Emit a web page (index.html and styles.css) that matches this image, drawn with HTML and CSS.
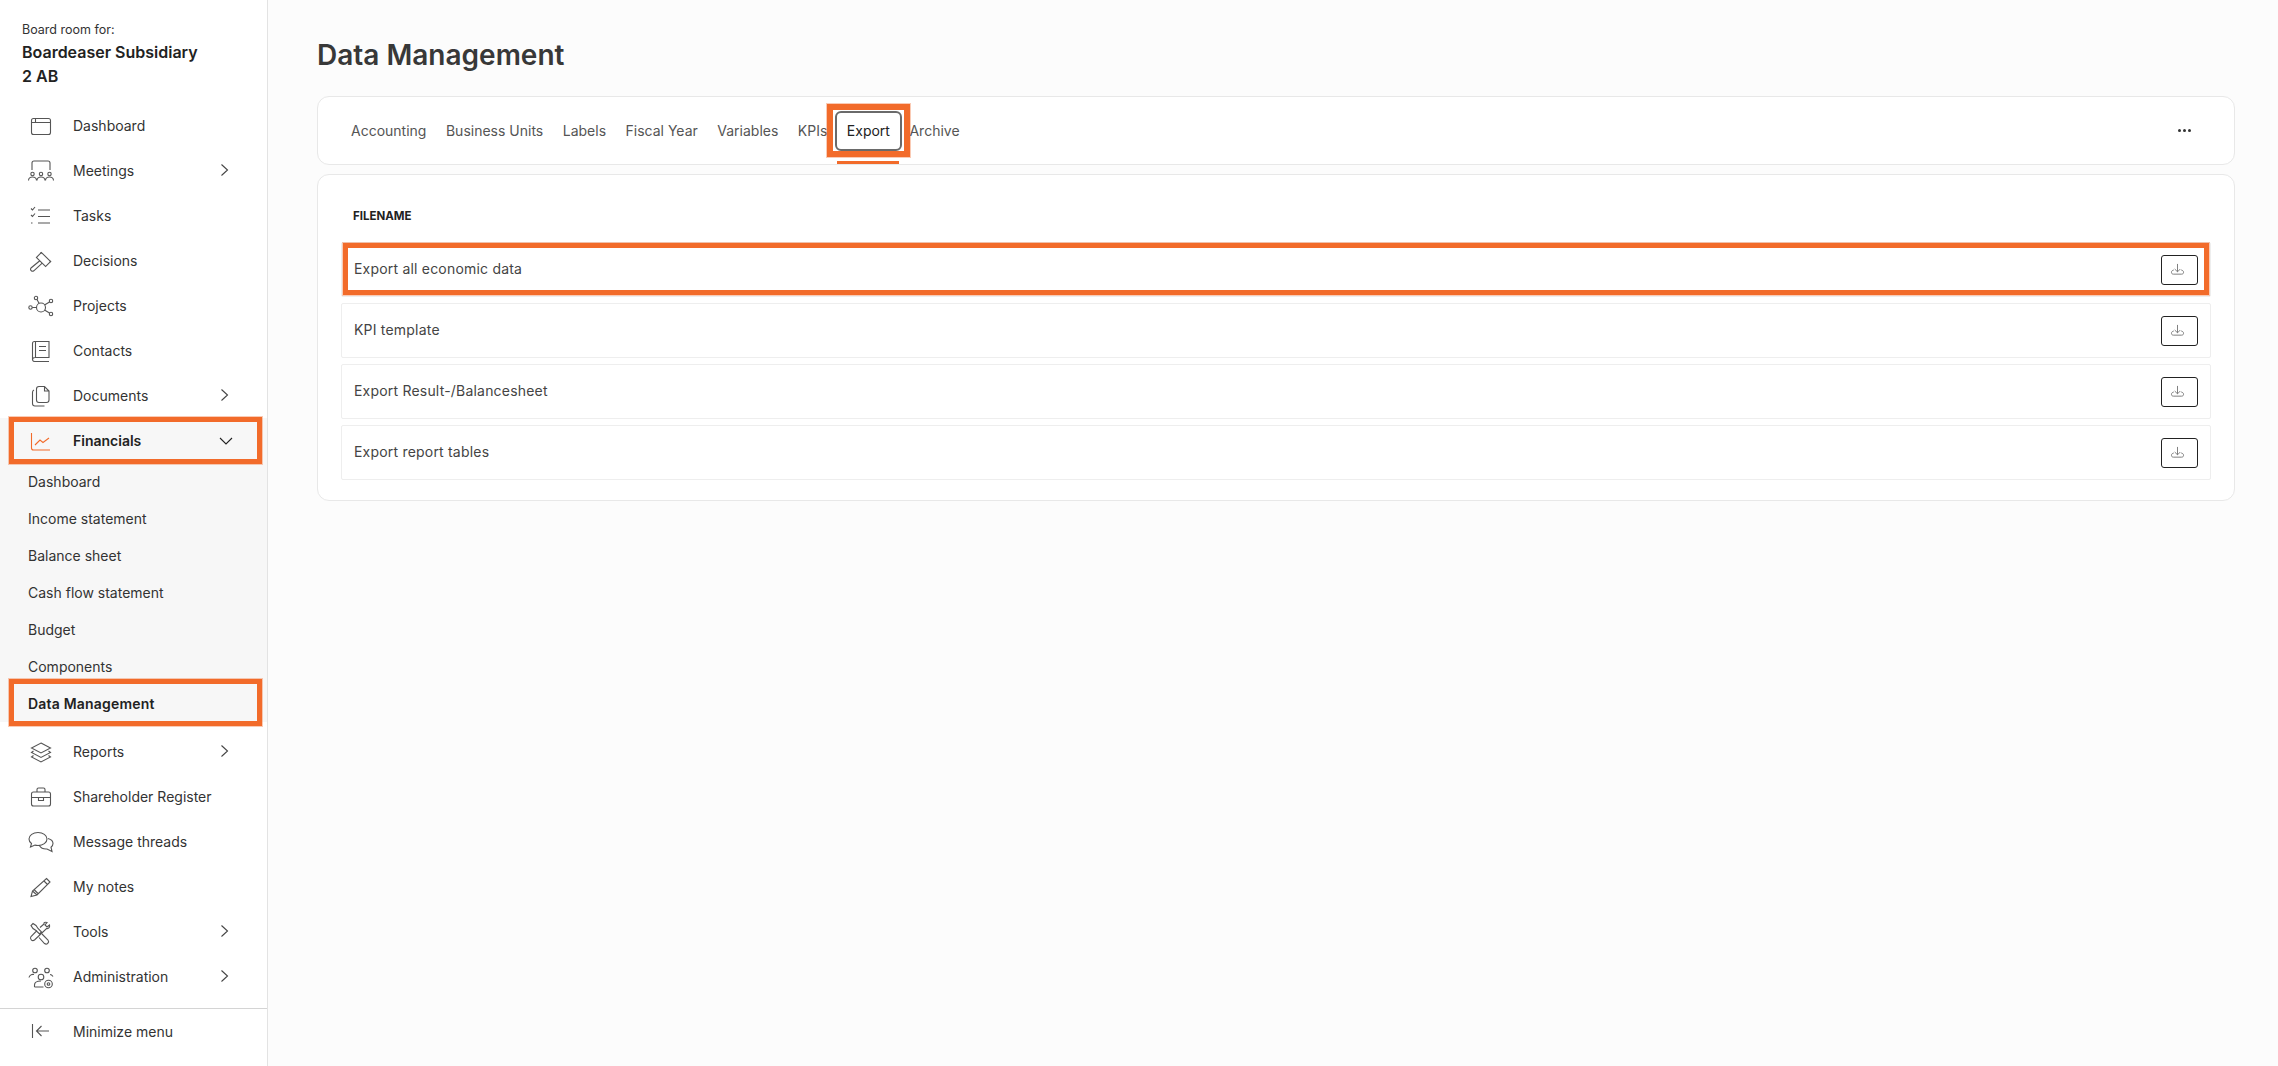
FILE: index.html
```html
<!DOCTYPE html>
<html lang="en">
<head>
<meta charset="utf-8">
<title>Data Management</title>
<link rel="stylesheet" href="styles.css">
</head>
<body>
<aside class="sidebar">
  <div class="org">
    <div class="org-label">Board room for:</div>
    <div class="org-name">Boardeaser Subsidiary 2 AB</div>
  </div>
  <nav class="nav">
    <a class="nav-row"><svg class="ico" viewBox="0 0 28 28"><rect x="4.5" y="6.5" width="19" height="16" rx="2"/><path d="M4.5 10.5h19M8.5 6.5v4"/></svg><span>Dashboard</span></a>
    <a class="nav-row"><svg class="ico" viewBox="0 0 28 28"><path d="M5 13V6a2 2 0 0 1 2-2h14a2 2 0 0 1 2 2v7"/><circle cx="5.5" cy="17" r="1.7"/><circle cx="14" cy="17" r="1.7"/><circle cx="22.5" cy="17" r="1.7"/><path d="M1.5 23.5a4 3.5 0 0 1 8 0M10 23.5a4 3.5 0 0 1 8 0M18.5 23.5a4 3.5 0 0 1 8 0"/></svg><span>Meetings</span><svg class="chev" viewBox="0 0 14 14"><path d="M3.5 1.5l6 5.5-6 5.5"/></svg></a>
    <a class="nav-row"><svg class="ico" viewBox="0 0 28 28"><path d="M4 6.5l1.500 1.500 2.500-3M4 13l1.500 1.500 2.500-3M4 21h1.500M11 8h12M11 14.500h12M11 21h12"/></svg><span>Tasks</span></a>
    <a class="nav-row"><svg class="ico" viewBox="0 0 28 28"><rect x="13" y="6" width="7" height="13" transform="rotate(-45 16.500 12.500)"/><path d="M12.800 13.800L4 21a2 2 0 0 0 2.800 2.800L15.200 16.200M13.500 5.500l1 1M23 15l1-1"/></svg><span>Decisions</span></a>
    <a class="nav-row"><svg class="ico" viewBox="0 0 28 28"><circle cx="14" cy="15.500" r="4.500"/><circle cx="3.500" cy="15.500" r="1.700"/><circle cx="9" cy="6" r="1.700"/><circle cx="24" cy="9" r="1.700"/><circle cx="24" cy="22" r="1.700"/><path d="M5.200 15.500h4.300M10 7.500l2 3.800M22.500 10l-5 3M22.500 21l-5-3"/></svg><span>Projects</span></a>
    <a class="nav-row"><svg class="ico" viewBox="0 0 28 28"><path d="M8 4.500h14v16H8a2.500 2.500 0 0 0-2.500 2.500V6.500a2 2 0 0 1 2-2zM5.500 23a2.500 2.500 0 0 0 2.500 1.500h14M8.500 4.500v16M12 9.500h7M12 13.500h7"/></svg><span>Contacts</span></a>
    <a class="nav-row"><svg class="ico" viewBox="0 0 28 28"><path d="M9.500 7a2.500 2.500 0 0 1 2.500-2.500h5.500l4.500 4.500v9a2.500 2.500 0 0 1-2.500 2.500H12a2.500 2.500 0 0 1-2.500-2.500zM17.500 4.500V9H22M7 8a2.500 2.500 0 0 0-1.500 2.500v11A2.500 2.500 0 0 0 8 24h9.500"/></svg><span>Documents</span><svg class="chev" viewBox="0 0 14 14"><path d="M3.5 1.5l6 5.5-6 5.5"/></svg></a>
    <div class="group">
      <a class="nav-row open"><svg class="ico ico-active" viewBox="0 0 28 28"><path d="M4.500 6v15a2 2 0 0 0 2 2h16.500M8 18l5-5 3 2.500 6-4.500"/></svg><span>Financials</span><svg class="chev chev-down" viewBox="0 0 14 14"><path d="M1 4l6 6 6-6"/></svg><i class="mark"></i></a>
      <a class="sub-row">Dashboard</a>
      <a class="sub-row">Income statement</a>
      <a class="sub-row">Balance sheet</a>
      <a class="sub-row">Cash flow statement</a>
      <a class="sub-row">Budget</a>
      <a class="sub-row">Components</a>
      <a class="sub-row current">Data Management<i class="mark"></i></a>
    </div>
    <a class="nav-row after-group"><svg class="ico" viewBox="0 0 28 28"><path d="M14 5l9.500 5-9.500 5-9.500-5zM6.500 13l-2 1.500 9.500 5 9.500-5-2-1.500M6.500 17.500l-2 1.500 9.500 5 9.500-5-2-1.500"/></svg><span>Reports</span><svg class="chev" viewBox="0 0 14 14"><path d="M3.5 1.5l6 5.5-6 5.5"/></svg></a>
    <a class="nav-row"><svg class="ico" viewBox="0 0 28 28"><rect x="4.500" y="9" width="19" height="14" rx="2"/><path d="M10 9V6.500a1.500 1.500 0 0 1 1.500-1.500h5A1.500 1.500 0 0 1 18 6.500V9M4.500 14.500h19M11.500 14.500v3h5v-3"/></svg><span>Shareholder Register</span></a>
    <a class="nav-row"><svg class="ico" viewBox="0 0 28 28"><path d="M11 4.500c5 0 9 2.800 9 6.500s-4 6.500-9 6.500c-1 0-2-.1-3-.4L3.500 19l1-3.500C2.800 14.300 2 12.700 2 11c0-3.700 4-6.500 9-6.500zM21 10.500c3 .8 5 2.800 5 5 0 1.500-.8 2.800-2 3.700l1 4.300-5-2.500c-3 .2-6-.7-7.500-3.200"/></svg><span>Message threads</span></a>
    <a class="nav-row"><svg class="ico" viewBox="0 0 28 28"><path d="M19.500 5.500l3.500 3.500L10 22l-6 1.500L5.500 18zM17 8l3.500 3.500M5.500 18L10 22M7 16.500l4 4"/></svg><span>My notes</span></a>
    <a class="nav-row"><svg class="ico" viewBox="0 0 28 28"><path d="M6 5.500L9 7.500l2 3 3.500 3.500-2 2L9 12.500l-3-2-2-3zM13 9.500l4-3.500c-.5-1.500 1-2 3-1.500L18 7l2 2 2.500-2c.5 2-.5 4-3 3.500L7.500 22a2.500 2.500 0 0 1-3.500-3.500l6-6M15 16l6 6a2.500 2.500 0 0 1-3.500 3.500l-5.500-6"/></svg><span>Tools</span><svg class="chev" viewBox="0 0 14 14"><path d="M3.5 1.5l6 5.5-6 5.5"/></svg></a>
    <a class="nav-row"><svg class="ico" viewBox="0 0 28 28"><circle cx="8" cy="7.500" r="2.300"/><circle cx="20" cy="7.500" r="2.300"/><circle cx="14" cy="14" r="2.800"/><path d="M2 14.500c.5-2.500 3-3.500 5-3M23 11.500c1 0 2 .5 3 2M7.500 24v-2c0-2.500 2.500-4 6.500-4M7.500 24h9"/><circle cx="21.500" cy="21" r="3.800"/><circle cx="21.500" cy="21" r="1.300"/></svg><span>Administration</span><svg class="chev" viewBox="0 0 14 14"><path d="M3.5 1.5l6 5.5-6 5.5"/></svg></a>
  </nav>
  <a class="nav-row minimize"><svg class="ico" viewBox="0 0 28 28"><path d="M5.500 7v14M22 14H9.500M14.500 9l-5 5 5 5"/></svg><span>Minimize menu</span></a>
</aside>
<main class="main">
  <h1 class="title">Data Management</h1>
  <section class="card tabs-card">
    <div class="tabs">
      <a class="tab">Accounting</a>
      <a class="tab">Business Units</a>
      <a class="tab">Labels</a>
      <a class="tab">Fiscal Year</a>
      <a class="tab">Variables</a>
      <a class="tab">KPIs</a>
      <a class="tab active">Export<i class="ring"></i><i class="mark"></i><i class="underline"></i></a>
      <a class="tab">Archive</a>
    </div>
    <div class="more"><b></b><b></b><b></b></div>
  </section>
  <section class="card files-card">
    <div class="files-head">FILENAME</div>
    <div class="file-row"><span>Export all economic data</span><button class="dl"><svg viewBox="0 0 16 14"><path d="M8 1v8.500M5 6.500l3 3 3-3M4 7.500c-1.500.5-2.500 1-2.500 2.500 0 1.500 1 2 2 2h9c1 0 2-.5 2-2 0-1.500-1-2-2.500-2.500"/></svg></button><i class="mark"></i></div>
    <div class="file-row"><span>KPI template</span><button class="dl"><svg viewBox="0 0 16 14"><path d="M8 1v8.500M5 6.500l3 3 3-3M4 7.500c-1.500.5-2.500 1-2.500 2.500 0 1.500 1 2 2 2h9c1 0 2-.5 2-2 0-1.500-1-2-2.500-2.500"/></svg></button></div>
    <div class="file-row"><span>Export Result-/Balancesheet</span><button class="dl"><svg viewBox="0 0 16 14"><path d="M8 1v8.500M5 6.500l3 3 3-3M4 7.500c-1.500.5-2.500 1-2.500 2.500 0 1.500 1 2 2 2h9c1 0 2-.5 2-2 0-1.500-1-2-2.500-2.500"/></svg></button></div>
    <div class="file-row"><span>Export report tables</span><button class="dl"><svg viewBox="0 0 16 14"><path d="M8 1v8.500M5 6.500l3 3 3-3M4 7.500c-1.500.5-2.500 1-2.500 2.500 0 1.500 1 2 2 2h9c1 0 2-.5 2-2 0-1.500-1-2-2.500-2.500"/></svg></button></div>
  </section>
</main>
</body>
</html>
```
FILE: styles.css
```css
* { box-sizing: border-box; }
html, body { height: 100%; }
body {
  margin: 0;
  display: flex;
  height: 1066px;
  overflow: hidden;
  background: #fcfcfc;
  color: #333;
  font-family: "Inter", "Liberation Sans", sans-serif;
  font-size: 14px;
}
.sidebar {
  width: 268px;
  flex: none;
  background: #fff;
  border-right: 1px solid #e3e3e3;
  display: flex;
  flex-direction: column;
}
.org { padding: 19px 22px 15px; }
.org-label { font-size: 12.5px; line-height: 21px; }
.org-name { font-size: 16px; font-weight: 600; line-height: 24px; width: 185px; color: #222; }
.nav { flex: none; }
.nav-row {
  position: relative;
  display: flex;
  align-items: center;
  height: 45px;
  padding-left: 27px;
}
.nav-row > span { margin-left: 18px; }
.ico { width: 28px; height: 28px; flex: none; fill: none; stroke: #555; stroke-width: 1.1; }
.ico-active { stroke: #f26b2a; }
.chev {
  position: absolute;
  left: 218px;
  top: 15px;
  width: 14px;
  height: 14px;
  fill: none;
  stroke: #444;
  stroke-width: 1.1;
}
.chev-down { left: 219px; top: 16px; stroke: #222; }
.group { background: #f7f7f7; }
.open > span { font-weight: 600; color: #222; }
.sub-row {
  position: relative;
  display: flex;
  align-items: center;
  height: 37px;
  padding-left: 28px;
}
.current { font-weight: 600; color: #222; letter-spacing: .2px; }
.after-group { margin-top: 7px; }
.minimize { margin-top: auto; height: 45px; border-top: 1px solid #d4d4d4; margin-bottom: 13px; }
.mark {
  position: absolute;
  border: 5px solid #f26b2a;
  box-shadow: 0 0 0 1px rgba(242, 107, 42, .35);
  pointer-events: none;
}
.open > .mark { left: 9px; right: 5px; top: -1px; bottom: -1px; }
.current > .mark { left: 9px; right: 5px; top: -6px; bottom: -4px; }
.main {
  flex: 1;
  min-width: 0;
  padding: 0 43px 0 49px;
}
.title {
  margin: 0;
  height: 96px;
  padding-top: 35px;
  font-size: 28px;
  line-height: 40px;
  font-weight: 600;
  color: #383838;
}
.card {
  background: #fff;
  border: 1px solid #e8e8e8;
  border-radius: 12px;
}
.tabs-card {
  height: 69px;
  display: flex;
  align-items: center;
  justify-content: space-between;
  padding: 0 43px 0 33px;
  margin-bottom: 9px;
}
.tabs { display: flex; gap: 19.5px; }
.tab {
  position: relative;
  height: 67px;
  display: flex;
  align-items: center;
  color: #555;
}
.tab.active { color: #222; }
.ring {
  position: absolute;
  left: -12px;
  right: -12px;
  top: 14px;
  bottom: 13px;
  border: 2px solid #6a6a6a;
  border-radius: 6px;
}
.tab > .mark { left: -20px; right: -20px; top: 7px; bottom: 7px; border-width: 6px; }
.underline {
  position: absolute;
  left: -10px;
  right: -9px;
  bottom: 0;
  height: 3px;
  background: #f26b2a;
}
.more { display: flex; gap: 2px; }
.more b { width: 3px; height: 3px; border-radius: 50%; background: #333; }
.files-card { padding: 31px 23px 21px; height: 327px; }
.files-head {
  font-size: 11.5px;
  font-weight: 700;
  line-height: 20px;
  color: #222;
  padding-left: 12px;
  margin-bottom: 16px;
}
.file-row {
  position: relative;
  display: flex;
  align-items: center;
  justify-content: space-between;
  height: 55px;
  margin-bottom: 6px;
  padding: 0 12px;
  border: 1px solid #eee;
  border-radius: 2px;
  color: #444;
  letter-spacing: .2px;
}
.file-row > span { margin-bottom: 2px; }
.file-row > .mark { left: 1px; right: 1px; top: 0; bottom: 1px; }
.dl {
  width: 37px;
  height: 30px;
  padding: 0 4px 0 0;
  background: #fff;
  border: 1px solid #222;
  border-radius: 3px;
  display: flex;
  align-items: center;
  justify-content: center;
}
.dl svg { width: 15px; height: 13px; fill: none; stroke: #777; stroke-width: 1; }
```
